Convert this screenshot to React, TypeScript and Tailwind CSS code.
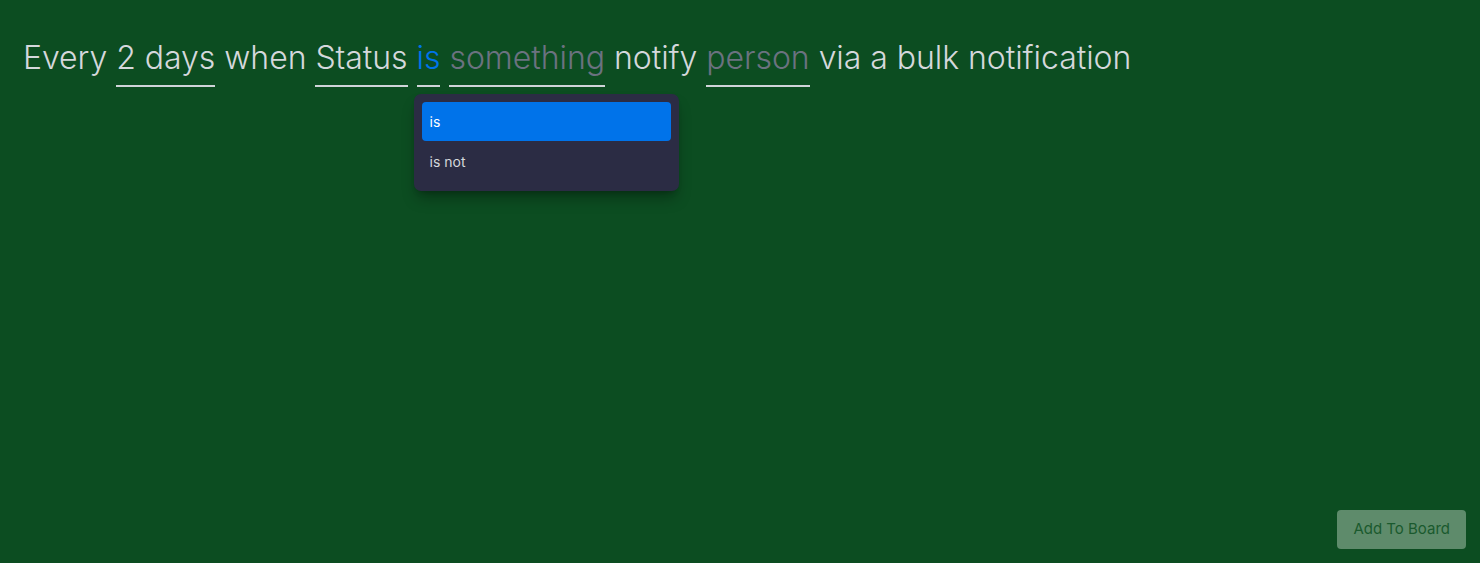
import { useState } from "react"

function Field({ text, tone = "value", open = false }: { text: string; tone?: "value" | "placeholder" | "active"; open?: boolean }) {
  const color =
    tone === "active" ? "text-[#0073ea]" : tone === "placeholder" ? "text-[#6b7280]" : "text-[#d5d8dc]"
  return (
    <span className="relative inline-flex flex-col">
      <span className={`${color} leading-[40px]`}>{text}</span>
      <span className="mt-[7px] h-[2px] bg-[#d0d4d8]" />
      {open && (
        <div className="absolute left-[-3px] top-[56px] z-10 w-[265px] rounded-[7px] bg-[#2b2c44] p-2 text-sm font-normal tracking-normal shadow-lg shadow-black/30">
          <div className="flex h-[39px] items-center rounded-[4px] bg-[#0073ea] px-2 text-white">is</div>
          <div className="flex h-[42px] items-center px-2 text-[#d5d8dc]">is not</div>
        </div>
      )}
    </span>
  )
}

export default function App() {
  const [open] = useState(true)

  return (
    <div className="flex h-[563px] w-full flex-col bg-[#0c4d21] font-['Inter',sans-serif]">
      <main className="flex-1 px-[23px] pt-[38px]">
        <div className="flex items-start gap-[9px] text-[32px] font-light tracking-[-0.05px] text-[#d5d8dc]">
          <span className="leading-[40px]">Every</span>
          <Field text="2 days" />
          <span className="leading-[40px]">when</span>
          <Field text="Status" />
          <Field text="is" tone="active" open={open} />
          <Field text="something" tone="placeholder" />
          <span className="leading-[40px]">notify</span>
          <Field text="person" tone="placeholder" />
          <span className="leading-[40px]">via a bulk notification</span>
        </div>
      </main>

      <footer className="flex justify-end px-[14px] pb-[14px]">
        <button className="h-[39px] rounded-[4px] bg-[#5e8b6b] px-[16px] text-[15px] text-[#1a5a2e]">
          Add To Board
        </button>
      </footer>
    </div>
  )
}
